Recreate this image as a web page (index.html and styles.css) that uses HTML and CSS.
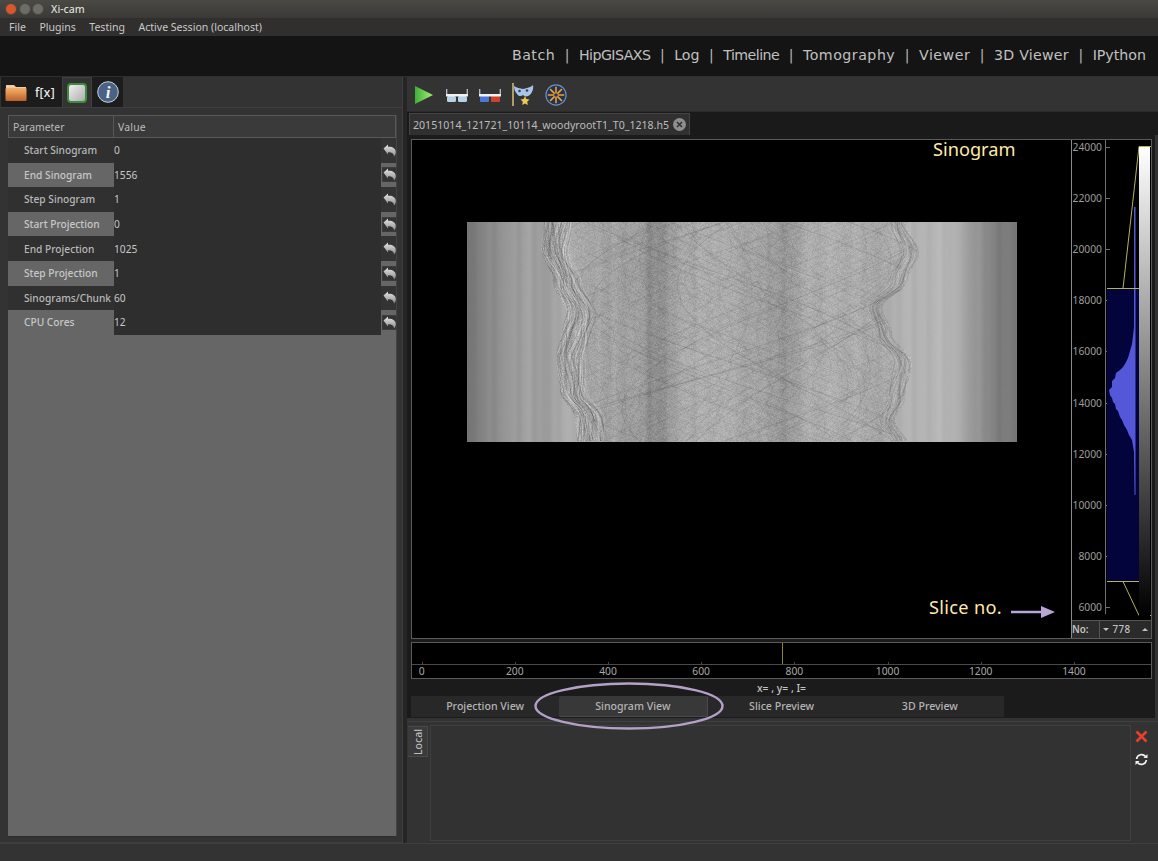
FILE: index.html
```html
<!DOCTYPE html>
<html lang="en">
<head>
<meta charset="utf-8">
<title>Xi-cam</title>
<link rel="stylesheet" href="styles.css">
</head>
<body>
<svg class="defs" width="0" height="0">
  <defs>
    <linearGradient id="gFolder" x1="0" y1="0" x2="0" y2="1"><stop offset="0" stop-color="#f0b070"/><stop offset=".3" stop-color="#e89a55"/><stop offset="1" stop-color="#b8602a"/></linearGradient>
    <linearGradient id="gSq" x1="0" y1="0" x2="1" y2="1"><stop offset="0" stop-color="#f4f4f4"/><stop offset="1" stop-color="#a8a8a8"/></linearGradient>
    <linearGradient id="gPlay" x1="0" y1="0" x2="1" y2="0"><stop offset="0" stop-color="#3fae3a"/><stop offset="1" stop-color="#a6f070"/></linearGradient>
    <linearGradient id="gArrow" x1="0" y1="0" x2="0" y2="1"><stop offset="0" stop-color="#e6e6e6"/><stop offset="1" stop-color="#8c8c8c"/></linearGradient>
    <symbol id="reset" viewBox="0 0 13 13">
      <path d="M.5 4.500 5 .5v2.200C9.500 2.400 12.800 4.400 12.800 8c0 1.700-.6 3.200-1.800 4.500.1-2.700-2-4.400-6-4.200v2.200z" fill="url(#gArrow)"/>
    </symbol>
    <symbol id="glasses" viewBox="0 0 22 13">
      <path d="M.7 0v7M21.300 0v7" stroke="#b8c0c6" stroke-width="1.300" fill="none"/>
      <rect x="0" y="5" width="22" height="2.500" fill="#eef2f5"/>
    </symbol>
  </defs>
</svg>
<div class="app">
  <header class="titlebar">
    <span class="light light-close"></span><span class="light"></span><span class="light"></span>
    <span class="title">Xi-cam</span>
  </header>
  <nav class="menubar">
    <span>File</span><span>Plugins</span><span>Testing</span><span>Active Session (localhost)</span>
  </nav>
  <nav class="perspectives">
    <span class="wide">Batch</span><i>|</i><span class="tight">HipGISAXS</span><i>|</i><span>Log</span><i>|</i><span class="tight">Timeline</span><i>|</i><span class="wide">Tomography</span><i>|</i><span class="wide">Viewer</span><i>|</i><span class="mid">3D Viewer</span><i>|</i><span>IPython</span>
  </nav>
  <main class="workspace">
    <aside class="left">
      <div class="lefttabs">
        <div class="ltab ltab-dark ltab-wide">
          <svg width="22" height="18" viewBox="0 0 22 18"><path d="M1 2h8l2 2h10v3H1z" fill="#f2c9a0"/><rect x="0.500" y="5" width="21" height="13" rx="1" fill="url(#gFolder)"/></svg>
          <span class="fx">f[x]</span>
        </div>
        <div class="ltab ltab-sel">
          <svg width="20" height="20" viewBox="0 0 20 20"><rect x="1" y="1" width="18" height="18" rx="3" fill="url(#gSq)" stroke="#3f8a3c" stroke-width="2"/></svg>
        </div>
        <div class="ltab ltab-dark">
          <svg width="22" height="22" viewBox="0 0 22 22"><circle cx="11" cy="11" r="10.300" fill="#4a6285" stroke="#c9d2dc" stroke-width="1"/><text x="11" y="17" class="info-i" text-anchor="middle">i</text></svg>
        </div>
      </div>
      <div class="leftframe">
        <div class="params">
          <div class="phead"><span class="pc1">Parameter</span><span class="pc2">Value</span></div>
          <div class="prow"><span class="plabel">Start Sinogram</span><span class="pvalue">0</span><span class="pbtn"><svg class="ri"><use href="#reset"/></svg></span></div>
          <div class="prow alt"><span class="plabel">End Sinogram</span><span class="pvalue">1556</span><span class="pbtn"><svg class="ri"><use href="#reset"/></svg></span></div>
          <div class="prow"><span class="plabel">Step Sinogram</span><span class="pvalue">1</span><span class="pbtn"><svg class="ri"><use href="#reset"/></svg></span></div>
          <div class="prow alt"><span class="plabel">Start Projection</span><span class="pvalue">0</span><span class="pbtn"><svg class="ri"><use href="#reset"/></svg></span></div>
          <div class="prow"><span class="plabel">End Projection</span><span class="pvalue">1025</span><span class="pbtn"><svg class="ri"><use href="#reset"/></svg></span></div>
          <div class="prow alt"><span class="plabel">Step Projection</span><span class="pvalue">1</span><span class="pbtn"><svg class="ri"><use href="#reset"/></svg></span></div>
          <div class="prow"><span class="plabel">Sinograms/Chunk</span><span class="pvalue">60</span><span class="pbtn"><svg class="ri"><use href="#reset"/></svg></span></div>
          <div class="prow alt"><span class="plabel">CPU Cores</span><span class="pvalue">12</span><span class="pbtn"><svg class="ri"><use href="#reset"/></svg></span></div>
        </div>
      </div>
    </aside>
    <div class="splitter"></div>
    <section class="right">
      <div class="toolbar">
        <svg class="tool" width="18" height="18" viewBox="0 0 18 18"><path d="M0 0 18 9 0 18z" fill="url(#gPlay)"/></svg>
        <svg class="tool" width="22" height="13" viewBox="0 0 22 13"><rect x="1" y="7" width="9" height="6" rx="1.500" fill="#b6d2e4"/><rect x="12" y="7" width="9" height="6" rx="1.500" fill="#b6d2e4"/><use href="#glasses"/></svg>
        <svg class="tool" width="22" height="13" viewBox="0 0 22 13"><rect x="1" y="7" width="9" height="6" rx="1" fill="#4a78d8"/><rect x="12" y="7" width="9" height="6" rx="1" fill="#d0402a"/><use href="#glasses"/></svg>
        <svg class="tool" width="22" height="24" viewBox="0 0 22 24"><path d="M1 0v23" stroke="#d8c27a" stroke-width="1.500"/><path d="M2 3c3 2 6 2 9 3 3-1 7-1 10-4 1 5-2 10-5 11-2 1-4 0-5-1-2 2-5 1-6-1C3 9 2 6 2 3z" fill="#a9c4ea"/><circle cx="7.500" cy="8" r="1.300" fill="#33415a"/><circle cx="15" cy="7.500" r="1.300" fill="#33415a"/><path d="m13 13 1.300 3 3.200.5-2.300 2.200.6 3.300-2.800-1.600-2.800 1.600.6-3.300L8.500 16.500l3.200-.5z" fill="#f0c850"/></svg>
        <svg class="tool" width="22" height="22" viewBox="0 0 24 24"><circle cx="12" cy="12" r="11" fill="#24344c" stroke="#6f8fc4" stroke-width="1.300"/><g stroke="#f0a030" stroke-width="1.700"><path d="M12 3v18M3 12h18M5.600 5.600l12.800 12.800M18.400 5.600 5.600 18.400"/></g><circle cx="12" cy="12" r="2" fill="#24344c"/></svg>
      </div>
      <div class="docbar">
        <div class="doctab">
          <span>20151014_121721_10114_woodyrootT1_T0_1218.h5</span>
          <svg width="13" height="13" viewBox="0 0 13 13"><circle cx="6.500" cy="6.500" r="6.500" fill="#8e8e8e"/><path d="m4 4 5 5M9 4 4 9" stroke="#2c2c2c" stroke-width="1.400"/></svg>
        </div>
      </div>
      <div class="viewer">
        <div class="viewport">
          <div class="image-area">
            <canvas id="sino" width="550" height="220"></canvas>
            <span class="note note-sino">Sinogram</span>
            <span class="note note-slice">Slice no.</span>
            <svg class="note-arrow" width="44" height="12" viewBox="0 0 44 12"><path d="M0 4.700h30V0l14 6-14 6V7.300H0z" fill="#b9a5d8"/></svg>
          </div>
          <div class="lut">
            <div class="lut-plot">
              <div class="axis">
                <span>24000</span><span>22000</span><span>20000</span><span>18000</span><span>16000</span><span>14000</span><span>12000</span><span>10000</span><span>8000</span><span>6000</span>
              </div>
              <svg class="hist" width="46" height="481" viewBox="0 0 46 481">
                <rect x="0" y="149" width="32" height="293" fill="#04043c"/>
                <path d="M27 67V187L26 196 25 204 23 211 21 218 18 224 16 227 13 230 9 233 8 238 5 241 5 247 2 250 3 255 5 258 6 262 8 264 9 269 11 271 13 277 15 280 17 285 20 290 22 295 25 300 26 306 27 312 27.500 355H28.500V67z" fill="#5458d8"/>
                <path d="M0 148.500H32M16 148.500 32 6.500H44M0 441.500H32M16 441.500 32 475.500H44" stroke="#b5b35a" stroke-width="1" fill="none"/>
              </svg>
              <div class="gradbar"></div>
            </div>
            <div class="spin-row">
              <span class="no">No:</span>
              <span class="spin"><b class="down"></b><span>778</span><b class="up"></b></span>
            </div>
          </div>
        </div>
        <div class="slider-plot">
          <div class="slider-track"><span class="marker"></span></div>
          <div class="slider-ticks">
            <span>0</span><span>200</span><span>400</span><span>600</span><span>800</span><span>1000</span><span>1200</span><span>1400</span>
          </div>
        </div>
        <div class="readout">x= , y= , I=</div>
        <div class="viewtabs">
          <span>Projection View</span><span class="vsel">Sinogram View</span><span>Slice Preview</span><span>3D Preview</span>
        </div>
      </div>
      <div class="dock">
        <div class="dock-tabs"><span class="local">Local</span></div>
        <div class="dock-body"></div>
        <div class="dock-actions">
          <svg width="13" height="13" viewBox="0 0 13 13"><path d="M1.500 1.500 11.500 11.500M11.500 1.500 1.500 11.500" stroke="#e8402a" stroke-width="2.600"/></svg>
          <svg width="13" height="13" viewBox="0 0 13 13"><path d="M1.600 6A5 5 0 0 1 10.500 3.500M11.400 7A5 5 0 0 1 2.500 9.500" stroke="#f2f2f2" stroke-width="1.700" fill="none"/><path d="m12.500 1 0 4-4 0zM.5 12v-4h4z" fill="#f2f2f2"/></svg>
        </div>
      </div>
    </section>
  </main>
  <footer class="statusbar"></footer>
  <svg class="callout" width="200" height="52" viewBox="0 0 200 52"><ellipse cx="100" cy="26" rx="93.500" ry="22.500" fill="none" stroke="#b5a0c8" stroke-width="2.400"/></svg>
</div>
<script src="script.js"></script>
</body>
</html>
```
FILE: styles.css
```css
* { box-sizing: border-box; }
html, body { margin: 0; padding: 0; background: #333; }
body { font-family: "Noto Sans", sans-serif; font-size: 10px; color: #c4c4c4; }
.defs { position: absolute; }
.app { position: relative; width: 1158px; height: 861px; overflow: hidden; display: flex; flex-direction: column; }

.titlebar { height: 18px; flex: none; display: flex; align-items: center; padding-left: 5px; gap: 1.500px; background: linear-gradient(#4a4944, #3a3935); }
.light { width: 12px; height: 12px; border-radius: 50%; background: #6d6c66; border: 1px solid #4a4944; }
.light-close { background: #d8582c; }
.title { margin-left: 5.500px; font-size: 10.500px; font-weight: 500; color: #dcdcd6; }

.menubar { height: 18px; flex: none; display: flex; align-items: center; gap: 13.500px; padding-left: 9px; background: #302f2e; font-size: 10.550px; color: #c8c8c8; }

.perspectives { height: 41px; flex: none; display: flex; align-items: center; justify-content: flex-end; gap: 9.500px; padding: 0 12px 2px 0; background: #141414; border-bottom: 1px solid #2e2e2e; font-family: "DejaVu Sans", sans-serif; font-size: 14.200px; color: #c0c0c0; }
.perspectives i { font-style: normal; font-size: 14px; color: #b8b8b8; }
.perspectives .wide { letter-spacing: .5px; }
.perspectives .mid { letter-spacing: .25px; }
.perspectives .tight { letter-spacing: -.55px; }

.workspace { flex: 1; min-height: 0; display: flex; background: #333; }
.left { width: 403px; flex: none; display: flex; flex-direction: column; border-right: 1px solid #3e3e3e; border-bottom: 1px solid #3e3e3e; }
.lefttabs { height: 31px; flex: none; display: flex; padding-left: 1px; background: #333; border-bottom: 1px solid #3e3e3e; }
.ltab { width: 30px; display: flex; align-items: center; justify-content: center; }
.ltab-dark { background: #1c1c1c; }
.ltab-wide { width: 61px; justify-content: flex-start; padding-left: 4px; gap: 8px; }
.ltab-sel { background: #333; border: 1px solid #404040; border-bottom: none; }
.ltab:last-child { width: 31px; }
.fx { font-size: 12px; font-weight: 500; color: #ececec; letter-spacing: .3px; }
.info-i { font-family: "Liberation Serif", serif; font-size: 17px; font-style: italic; font-weight: 700; fill: #f4f4f4; }

.leftframe { flex: 1; min-height: 0; padding: 7px 5px 5px 8px; }
.params { height: 100%; background: #666; border-right: 1px solid #444; border-bottom: 1px solid #2c2c2c; display: flex; flex-direction: column; }
.phead { height: 23px; flex: none; display: flex; align-items: center; background: #3a3a3a; border: 1px solid #585858; font-size: 10.400px; color: #bcbcbc; }
.pc1 { width: 105px; height: 100%; display: flex; align-items: center; padding-left: 4px; border-right: 1px solid #585858; }
.pc2 { padding-left: 4px; letter-spacing: .2px; }
.prow { height: 24.600px; flex: none; display: flex; align-items: stretch; background: #303030; font-size: 10.200px; }
.plabel { width: 106px; display: flex; align-items: center; padding-left: 16px; font-weight: 500; color: #b8b8b8; white-space: nowrap; }
.alt .plabel { background: #666; color: #c8c8c8; }
.pvalue { width: 267px; display: flex; align-items: center; background: #2e2e2e; color: #c8c8c8; }
.pbtn { flex: 1; display: flex; align-items: center; justify-content: center; background: #333; padding-left: 1px; }
.alt .pbtn { background: #666; }
.ri { width: 13px; height: 13px; display: block; }
.alt .ri { background: #333; outline: 1px solid #3c3c3c; }

.splitter { width: 4px; flex: none; background: #252525; }

.right { flex: 1; min-width: 0; display: flex; flex-direction: column; }
.toolbar { height: 34px; flex: none; display: flex; align-items: center; gap: 11px; padding: 2px 0 0 8px; background: #333; }
.tool { display: block; }
.tool:first-child { margin-right: 2px; }
.docbar { height: 24px; flex: none; display: flex; align-items: flex-end; padding-left: 2px; background: #1a1a1a; border-top: 1px solid #2b2b2b; }
.doctab { height: 22px; width: 281px; display: flex; align-items: center; gap: 4px; padding-left: 3px; background: #303030; border: 1px solid #444; border-bottom: none; font-size: 10.600px; color: #bcbcbc; white-space: nowrap; }

.viewer { height: 583px; flex: none; padding: 4px 3px 0 4px; background: #1b1b1b; border-right: 3px solid #333; display: flex; flex-direction: column; }
.viewport { height: 500px; flex: none; display: flex; background: #000; border: 1px solid #5a5a5a; }
.image-area { position: relative; width: 659px; flex: none; padding: 82px 0 0 55px; }
#sino { display: block; width: 550px; height: 220px; }
.note { position: absolute; font-family: "Noto Sans", sans-serif; font-size: 18.200px; color: #ffeaa8; white-space: nowrap; }
.note-sino { left: 521px; top: -3px; }
.note-slice { left: 517px; top: 455px; letter-spacing: .3px; }
.note-arrow { position: absolute; left: 599px; top: 466px; }

.lut { flex: 1; display: flex; flex-direction: column; border-left: 1px solid #8a8a8a; }
.lut-plot { height: 480px; flex: none; display: flex; position: relative; }
.axis { width: 34px; flex: none; height: 474px; display: flex; flex-direction: column; justify-content: space-between; align-items: flex-end; border-right: 1px solid #707070; font-size: 10.300px; line-height: 14px; color: #9c9c9c; }
.axis span { height: 14px; padding-right: 3px; position: relative; white-space: nowrap; }
.axis span::after { content: ""; position: absolute; right: -5px; top: 7px; width: 5px; height: 1px; background: #707070; }
.hist { position: absolute; left: 35px; top: 0; }
.gradbar { position: absolute; left: 67px; top: 7px; width: 11px; height: 469px; background: linear-gradient(#fff, #000); }
.spin-row { flex: 1; display: flex; align-items: center; background: #2c2c2c; border-top: 1px solid #555; font-size: 9.800px; font-weight: 600; color: #c0c0c0; }
.no { width: 27px; }
.spin { flex: 1; height: 100%; display: flex; align-items: center; justify-content: space-between; padding: 0 3px; background: #2a2a2a; border-left: 1px solid #555; }
.spin b { width: 0; height: 0; border-left: 3px solid transparent; border-right: 3px solid transparent; }
.down { border-top: 3px solid #c0c0c0; }
.up { border-bottom: 3px solid #c0c0c0; }
.spin span { margin-right: 8px; font-weight: 500; letter-spacing: .4px; }

.slider-plot { height: 37px; flex: none; margin-top: 3px; background: #000; border: 1px solid #5a5a5a; display: flex; flex-direction: column; overflow: hidden; }
.slider-track { height: 22px; flex: none; position: relative; border-bottom: 1px solid #4a4a4a; }
.marker { position: absolute; left: 370px; top: 0; width: 1px; height: 21px; background: #8a8630; }
.slider-ticks { flex: 1; display: grid; grid-template-columns: repeat(8, 93.200px); margin-left: -37px; font-size: 10.300px; color: #a8a8a8; line-height: 12px; text-align: center; }
.slider-ticks span { position: relative; }
.slider-ticks span::before { content: ""; position: absolute; left: 50%; top: -3px; width: 1px; height: 3px; background: #4a4a4a; }
.readout { height: 17px; flex: none; display: flex; align-items: center; justify-content: center; font-size: 10.400px; font-weight: 500; color: #c4c4c4; }
.viewtabs { height: 21px; width: 593px; flex: none; display: grid; grid-template-columns: repeat(4, 148.250px); align-items: stretch; background: #282828; font-size: 10.600px; color: #b4b4b4; text-align: center; line-height: 20px; font-weight: 500; }
.vsel { background: #383838; border-bottom: 1px solid #4a4a4a; border-right: 1px solid #4a4a4a; border-radius: 2px; }

.dock { flex: 1; min-height: 0; display: flex; margin-top: 3px; padding: 3px 0 2px 1px; background: #333; border-top: 1px solid #3f3f3f; }
.dock-tabs { width: 21px; flex: none; padding-top: 1px; }
.local { display: flex; align-items: center; justify-content: center; width: 20px; height: 31px; background: #3a3a3a; border: 1px solid #4a4a4a; border-right: none; font-size: 10.500px; font-weight: 500; color: #bcbcbc; }
.local { writing-mode: vertical-rl; transform: rotate(180deg); }
.dock-body { width: 701px; flex: none; margin-left: 1px; background: #323232; border: 1px solid #3f3f3f; }
.dock-actions { flex: 1; display: flex; flex-direction: column; align-items: center; gap: 10px; padding: 5px 16px 0 4px; }
.dock-actions svg { display: block; flex: none; }

.statusbar { height: 18px; flex: none; background: #333; border-top: 1px solid #3f3f3f; }
.callout { position: absolute; left: 529px; top: 680px; }
```
FILE: script.js
```javascript
(function () {
  var cv = document.getElementById('sino');
  var ctx = cv.getContext('2d');
  var W = cv.width, H = cv.height;
  var seed = 12345;
  function rnd() { seed = (seed * 1664525 + 1013904223) >>> 0; return seed / 4294967296; }

  var keys = [[0,122],[18,132],[38,150],[62,160],[78,155],[100,170],[135,165],[170,162],[182,142],[198,146],[215,170],[255,174],[290,164],[315,150],[345,176],[390,172],[410,164],[440,178],[480,182],[500,162],[525,128],[550,116]];
  function base(x) {
    for (var i = 1; i < keys.length; i++) {
      if (x <= keys[i][0]) {
        var a = keys[i-1], b = keys[i], t = (x - a[0]) / (b[0] - a[0]);
        return a[1] + (b[1] - a[1]) * t;
      }
    }
    return 116;
  }
  var leftPts = [[0,77],[26,74],[60,86],[92,99],[112,94],[135,89],[170,93],[196,108],[220,110]];
  var rightPts = [[0,440],[30,452],[60,440],[85,415],[112,425],[140,445],[175,438],[200,428],[220,440]];
  function edge(pts, y) {
    for (var i = 1; i < pts.length; i++) {
      if (y <= pts[i][0]) {
        var a = pts[i-1], b = pts[i], t = (y - a[0]) / (b[0] - a[0]);
        t = t * t * (3 - 2 * t);
        return a[1] + (b[1] - a[1]) * t;
      }
    }
    return pts[pts.length-1][1];
  }

  var cols = [], x, k;
  for (x = 0; x < W; x++) cols[x] = base(x);
  var band = 0;
  for (x = 0; x < W; x++) { if (x % 5 === 0) band = (rnd() - .5) * 12; cols[x] += band; }
  for (k = 0; k < 2; k++) for (x = 1; x < W - 1; x++) cols[x] = (cols[x-1] + cols[x] + cols[x+1]) / 3;

  var img = ctx.createImageData(W, H);
  for (var y = 0; y < H; y++) {
    var l = edge(leftPts, y), r = edge(rightPts, y);
    for (x = 0; x < W; x++) {
      var inside = x > l && x < r;
      var n = inside ? (rnd() - .5) * 20 : (rnd() - .5) * 2;
      if (inside && x - l < 24) n += (rnd() - .5) * 30;
      if (inside && r - x < 14) n += (rnd() - .5) * 12;
      var v = cols[x] + n;
      var i = (y * W + x) * 4;
      img.data[i] = img.data[i+1] = img.data[i+2] = v;
      img.data[i+3] = 255;
    }
  }
  ctx.putImageData(img, 0, 0);

  ctx.save();
  ctx.beginPath();
  for (y = 0; y <= H; y += 4) ctx.lineTo(edge(leftPts, y), y);
  for (y = H; y >= 0; y -= 4) ctx.lineTo(edge(rightPts, y), y);
  ctx.closePath();
  ctx.clip();
  function wave(amp, freq, phase, cx, light, alpha, width) {
    ctx.beginPath();
    for (var yy = 0; yy <= H; yy += 3) {
      ctx.lineTo(cx + amp * Math.sin(yy * freq + phase), yy);
    }
    ctx.strokeStyle = light ? 'rgba(235,235,235,' + alpha + ')' : 'rgba(50,50,50,' + alpha + ')';
    ctx.lineWidth = width;
    ctx.stroke();
  }
  var s;
  for (s = 0; s < 260; s++) {
    wave(40 + rnd() * 190, .0125 + rnd() * .004, rnd() * 6.28, 200 + rnd() * 150, rnd() > .5, .04 + rnd() * .08, .7);
  }
  for (s = 0; s < 12; s++) {
    wave(120 + rnd() * 120, .0125 + rnd() * .004, rnd() * 6.28, 230 + rnd() * 110, false, .16, .8);
  }
  for (s = 0; s < 60; s++) {
    var p = rnd() * 6.28, off = rnd() * 26;
    ctx.beginPath();
    for (y = 0; y <= H; y += 3) ctx.lineTo(edge(leftPts, y) + off + 5 * Math.sin(y * .05 + p), y);
    ctx.strokeStyle = s % 2 ? 'rgba(245,245,245,.24)' : 'rgba(50,50,50,.2)';
    ctx.lineWidth = .8;
    ctx.stroke();
    ctx.beginPath();
    for (y = 0; y <= H; y += 3) ctx.lineTo(edge(rightPts, y) - off * .6 + 4 * Math.sin(y * .05 + p), y);
    ctx.strokeStyle = s % 2 ? 'rgba(240,240,240,.09)' : 'rgba(50,50,50,.1)';
    ctx.stroke();
  }
  ctx.restore();
})();
```
